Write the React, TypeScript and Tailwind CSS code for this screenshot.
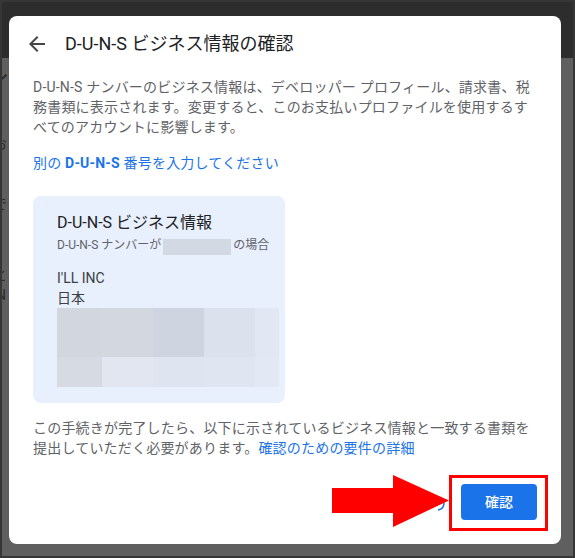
import React from "react";

const FONT = 'Roboto, "Noto Sans CJK JP", "Noto Sans", sans-serif';

const cells = [
  "bg-[#d1d6df]",
  "bg-[#d2d7e0]",
  "bg-[#cfd5e0]",
  "bg-[#dce2ed]",
  "bg-[#e2e8f3]",
  "bg-[#d5dae3]",
  "bg-[#e1e6f0]",
  "bg-[#dfe5f0]",
  "bg-[#e0e6f1]",
  "bg-[#e3e9f4]",
];

function BackArrow() {
  return (
    <svg width="24" height="24" viewBox="0 0 24 24" className="shrink-0">
      <path
        d="M20 11H7.83l5.59-5.59L12 4l-8 8 8 8 1.41-1.41L7.83 13H20v-2z"
        fill="#444746"
      />
    </svg>
  );
}

function BusinessCard() {
  return (
    <div className="mt-[23px] ml-6 w-[252px] rounded-lg bg-[#e8f0fe] pl-6 pt-[15px] pb-4">
      <div className="text-base leading-6 text-[#202124]">D-U-N-S ビジネス情報</div>
      <div className="flex items-center text-xs leading-4 text-[#5f6368] whitespace-nowrap">
        <span>D-U-N-S ナンバーが</span>
        <span className="mx-[2px] mt-[4px] inline-block h-4 w-[68px] bg-[#d3d9e3]" />
        <span>の場合</span>
      </div>
      <div className="mt-[13px] text-sm leading-5 text-[#3c4043]">I'LL INC</div>
      <div className="text-sm leading-5 text-[#3c4043]">日本</div>
      <div className="grid grid-cols-[45px_51px_51px_51px_24px] grid-rows-[49px_30px]">
        {cells.map((c, i) => (
          <div key={i} className={c} />
        ))}
      </div>
    </div>
  );
}

function Dialog() {
  return (
    <div className="absolute left-[7px] top-[14px] flex h-[528px] w-[552px] flex-col rounded-lg bg-white">
      <div className="flex items-center gap-4 pl-4 pt-4">
        <BackArrow />
        <h1 className="text-[18px] leading-6 text-[#202124]">D-U-N-S ビジネス情報の確認</h1>
      </div>

      <div className="mt-[21px] px-6 text-sm leading-5 tracking-[0.2px] text-[#5f6368] whitespace-nowrap">
        <div>D-U-N-S ナンバーのビジネス情報は、デベロッパー プロフィール、請求書、税</div>
        <div>務書類に表示されます。変更すると、このお支払いプロファイルを使用するす</div>
        <div>べてのアカウントに影響します。</div>
      </div>

      <div className="mt-[16px] px-6 text-sm leading-5 tracking-[0.2px] text-[#1a73e8]">
        別の <span className="font-bold">D-U-N-S</span> 番号を入力してください
      </div>

      <BusinessCard />

      <div className="mt-[15px] px-6 text-sm leading-5 tracking-[0.2px] text-[#5f6368] whitespace-nowrap">
        <div>この手続きが完了したら、以下に示されているビジネス情報と一致する書類を</div>
        <div>
          提出していただく必要があります。
          <span className="text-[#1a73e8]">確認のための要件の詳細</span>
        </div>
      </div>

      <div className="mt-[26px] flex justify-end px-6">
        <button className="h-9 w-[76px] rounded bg-[#1a73e8] text-sm font-medium text-white">
          確認
        </button>
      </div>
    </div>
  );
}

export default function App() {
  return (
    <div
      className="relative h-[558px] w-[575px] overflow-hidden border-2 border-[#363636] bg-[#5f5f5f]"
      style={{ fontFamily: FONT }}
    >
      <div className="h-[56px] bg-[#2d2d2d]" />

      {/* page content behind the scrim, mostly covered by the dialog */}
      <div className="flex w-[7px] flex-col overflow-hidden text-[#2a2a2a]">
        <div className="mt-[12px] -ml-[14px] text-[22px] leading-7">イ</div>
        <div className="mt-[36px] -ml-[9px] text-sm leading-5">お</div>
        <div className="mt-[40px] -ml-[9px] text-sm leading-5">で</div>
        <div className="mt-[51px] -ml-[9px] text-sm leading-5">と</div>
        <div className="-ml-[6px] text-sm leading-5">N</div>
      </div>

      <Dialog />

      {/* partly hidden text button under the arrow tip */}
      <svg className="absolute left-[434px] top-[500px]" width="10" height="10" viewBox="0 0 10 10">
        <path d="M8 1 Q8 7 2 8" fill="none" stroke="#1a73e8" strokeWidth="1.5" />
      </svg>

      {/* callout arrow */}
      <svg className="absolute left-[330px] top-[473px]" width="117" height="53" viewBox="0 0 117 53">
        <polygon points="0,13 61,13 61,0 117,25.5 61,52 61,38 0,38" fill="#ff0000" />
      </svg>

      {/* callout frame */}
      <div className="absolute left-[447px] top-[473px] h-[56px] w-[99px] border-[3px] border-[#ff0000]" />
    </div>
  );
}
